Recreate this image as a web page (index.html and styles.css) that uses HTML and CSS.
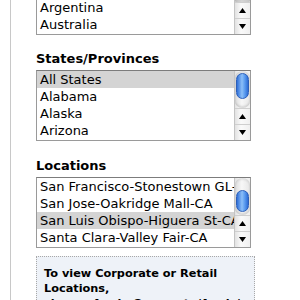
FILE: index.html
```html
<!DOCTYPE html>
<html lang="en">
<head>
    <meta charset="UTF-8">
    <title>Find a Location</title>
    <link rel="stylesheet" href="styles.css">
</head>
<body>
    <div class="panel">
        <div class="listbox cut">
            <div class="items">
                <div class="item">Argentina</div>
                <div class="item">Australia</div>
            </div>
            <div class="scrollbar">
                <div class="track"></div>
                <div class="arrow"><svg width="7" height="5"><polygon points="0,5 7,5 3.5,0"/></svg></div>
                <div class="arrow"><svg width="7" height="5"><polygon points="0,0 7,0 3.5,5"/></svg></div>
            </div>
        </div>

        <h3>States/Provinces</h3>
        <div class="listbox">
            <div class="items">
                <div class="item selected">All States</div>
                <div class="item">Alabama</div>
                <div class="item">Alaska</div>
                <div class="item">Arizona</div>
            </div>
            <div class="scrollbar">
                <div class="track">
                    <div class="thumb states-thumb"></div>
                </div>
                <div class="arrow"><svg width="7" height="5"><polygon points="0,5 7,5 3.5,0"/></svg></div>
                <div class="arrow"><svg width="7" height="5"><polygon points="0,0 7,0 3.5,5"/></svg></div>
            </div>
        </div>

        <h3 class="loc-title">Locations</h3>
        <div class="listbox">
            <div class="items">
                <div class="item">San Francisco-Stonestown GL-CA</div>
                <div class="item">San Jose-Oakridge Mall-CA</div>
                <div class="item selected">San Luis Obispo-Higuera St-CA</div>
                <div class="item">Santa Clara-Valley Fair-CA</div>
            </div>
            <div class="scrollbar">
                <div class="track">
                    <div class="thumb locations-thumb"></div>
                </div>
                <div class="arrow"><svg width="7" height="5"><polygon points="0,5 7,5 3.5,0"/></svg></div>
                <div class="arrow"><svg width="7" height="5"><polygon points="0,0 7,0 3.5,5"/></svg></div>
            </div>
        </div>

        <div class="note">
            To view Corporate or Retail Locations,<br>
            <span class="keep">choose Apple Corporate/Apple's</span><br>
            Retail Stores from the list above.
        </div>
    </div>
</body>
</html>
```

FILE: styles.css
```css
body {
    margin: 0;
    background-color: #fff;
    font-family: "DejaVu Sans", Verdana, sans-serif;
    color: #000;
    overflow: hidden;
}
.panel {
    margin-left: 10px;
    border-left: 1px solid #c8c8c8;
    padding-left: 25px;
    width: 217px;
    min-height: 300px;
}
h3 {
    font-size: 13px;
    font-weight: bold;
    line-height: 16px;
    margin: 16px 0 3px 0;
}
h3.loc-title {
    margin-top: 17px;
}
.listbox {
    display: flex;
    width: 213px;
    border: 1px solid #9a9a9a;
    border-top-color: #7c7c7c;
    background-color: #fff;
}
.listbox.cut {
    border-top: none;
    margin-top: -1px;
}
.items {
    flex: 1;
    min-width: 0;
    padding-bottom: 1px;
}
.item {
    height: 17px;
    line-height: 17px;
    font-size: 13px;
    padding-left: 3px;
    white-space: nowrap;
    overflow: hidden;
}
.item.selected {
    background-color: #d4d4d4;
}
.scrollbar {
    width: 15px;
    display: flex;
    flex-direction: column;
    border-left: 1px solid #c4c4c4;
    background: linear-gradient(to right, #e2e2e2, #fafafa 40%, #f0f0f0);
}
.track {
    flex: 1;
    border-radius: 7px;
    background: linear-gradient(to right, #dcdcdc, #f7f7f7 45%, #e6e6e6);
    box-shadow: inset 0 -2px 2px rgba(0, 0, 0, 0.12), inset 0 2px 2px rgba(0, 0, 0, 0.08);
    overflow: hidden;
}
.thumb {
    margin: 0 1px;
    border-radius: 7px;
    border: 1px solid #2c5fb8;
    background: linear-gradient(to right, #2f6fd8, #8cbff8 45%, #5b9cf0 70%, #2e6cd4);
}
.states-thumb {
    margin-top: 2px;
    height: 24px;
}
.locations-thumb {
    margin-top: 12px;
    height: 20px;
}
.arrow {
    height: 16px;
    display: flex;
    align-items: center;
    justify-content: center;
    border-top: 1px solid #cfcfcf;
    box-sizing: border-box;
}
.arrow svg {
    fill: #000;
}
.note {
    margin-top: 8px;
    width: 203px;
    padding: 9px 7px 8px 7px;
    border: 1px dotted #a8a8a8;
    background-color: #eef2f8;
    font-size: 11.3px;
    font-weight: bold;
    line-height: 15px;
}
.keep {
    white-space: nowrap;
}
```
